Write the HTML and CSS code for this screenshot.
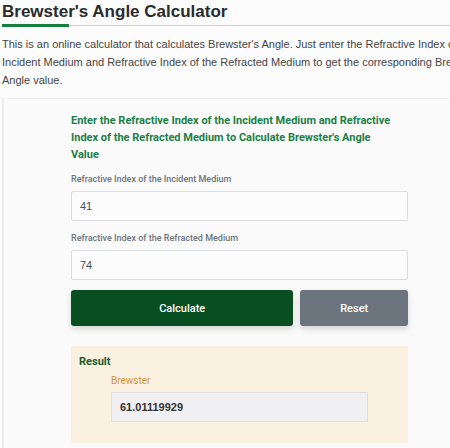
FILE: index.html
```html
<!DOCTYPE html>
<html lang="en">
<head>
    <meta charset="UTF-8">
    <meta name="viewport" content="width=device-width, initial-scale=1.0">
    <title>Brewster's Angle Calculator</title>
    <link rel="stylesheet" href="styles.css">
</head>
<body>
    <h1 class="page-title">Brewster's Angle Calculator</h1>
    <p class="intro">
        This is an online calculator that calculates Brewster's Angle. Just enter the Refractive Index of the<br>
        Incident Medium and Refractive Index of the Refracted Medium to get the corresponding Brewster's<br>
        Angle value.
    </p>

    <div class="calculator">
        <form class="calc-form">
            <h2>Enter the Refractive Index of the Incident Medium and Refractive Index of the Refracted Medium to Calculate Brewster's Angle Value</h2>
            <div class="form-group">
                <label for="incident">Refractive Index of the Incident Medium</label>
                <input type="text" id="incident" value="41">
            </div>
            <div class="form-group">
                <label for="refracted">Refractive Index of the Refracted Medium</label>
                <input type="text" id="refracted" value="74">
            </div>
            <div class="buttons">
                <button type="button" class="btn-calculate">Calculate</button>
                <button type="reset" class="btn-reset">Reset</button>
            </div>
            <div class="result">
                <h3>Result</h3>
                <div class="result-field">
                    <label for="brewster">Brewster</label>
                    <input type="text" id="brewster" value="61.01119929" readonly>
                </div>
            </div>
        </form>
    </div>
</body>
</html>
```

FILE: styles.css
```css
* {
    box-sizing: border-box;
}
body {
    font-family: Arial, "Liberation Sans", sans-serif;
    margin: 0;
    padding-left: 2px;
    background-color: #fcfcfc;
    color: #444;
    overflow: hidden;
}
.page-title {
    position: relative;
    margin: 0;
    padding: 1px 0 2px;
    border-bottom: 1px solid #ccc;
    font-size: 17px;
    line-height: 22px;
    color: #2b2b2b;
}
.page-title::after {
    content: "";
    position: absolute;
    left: 0;
    bottom: -2px;
    width: 67px;
    height: 3px;
    background-color: #15803d;
}
.intro {
    margin: 9px 0;
    font-size: 11px;
    line-height: 18px;
    white-space: nowrap;
}
.calculator {
    padding: 13px 42px 20px 67px;
    border-top: 1px solid #f0f0f0;
    border-left: 2px solid #ededed;
    background-color: #fafafa;
}
.calc-form {
    font-family: Roboto, Arial, sans-serif;
}
.calc-form h2 {
    margin: 0 0 9px;
    padding-right: 12px;
    font-size: 11px;
    line-height: 17px;
    color: #1b7f45;
}
.form-group {
    margin-bottom: 10px;
}
.form-group label {
    display: block;
    margin-bottom: 4px;
    font-size: 9px;
    font-weight: 500;
    line-height: 15px;
    color: #6c757d;
}
input {
    display: block;
    width: 100%;
    height: 30px;
    padding: 0 8px;
    border: 1px solid #dadddf;
    border-radius: 2px;
    background-color: #fcfcfc;
    font-family: Arial, "Liberation Sans", sans-serif;
    font-size: 11px;
    color: #495057;
}
.buttons {
    display: flex;
    gap: 7px;
    margin-bottom: 20px;
}
.buttons button {
    height: 36px;
    padding: 0;
    border: none;
    border-radius: 3px;
    box-shadow: 0 3px 6px rgba(0, 0, 0, 0.15);
    font-family: inherit;
    font-size: 11px;
    font-weight: 500;
    color: #fff;
    cursor: pointer;
}
.buttons .btn-calculate {
    width: 66%;
    background-color: #074f20;
}
.buttons .btn-reset {
    flex: 1;
    background-color: #6c757d;
}
.result {
    padding: 8px 8px 21px;
    background-color: #fbf1e0;
}
.result h3 {
    margin: 0 0 3px;
    font-size: 11px;
    line-height: 16px;
    color: #14602c;
}
.result-field {
    padding: 0 32px;
}
.result-field label {
    display: block;
    margin-bottom: 3px;
    font-size: 10px;
    line-height: 16px;
    color: #cf943c;
}
.result-field input {
    border-color: #dfdfdf;
    border-radius: 0;
    background-color: #f0eff2;
    font-weight: bold;
    color: #333;
}
```
